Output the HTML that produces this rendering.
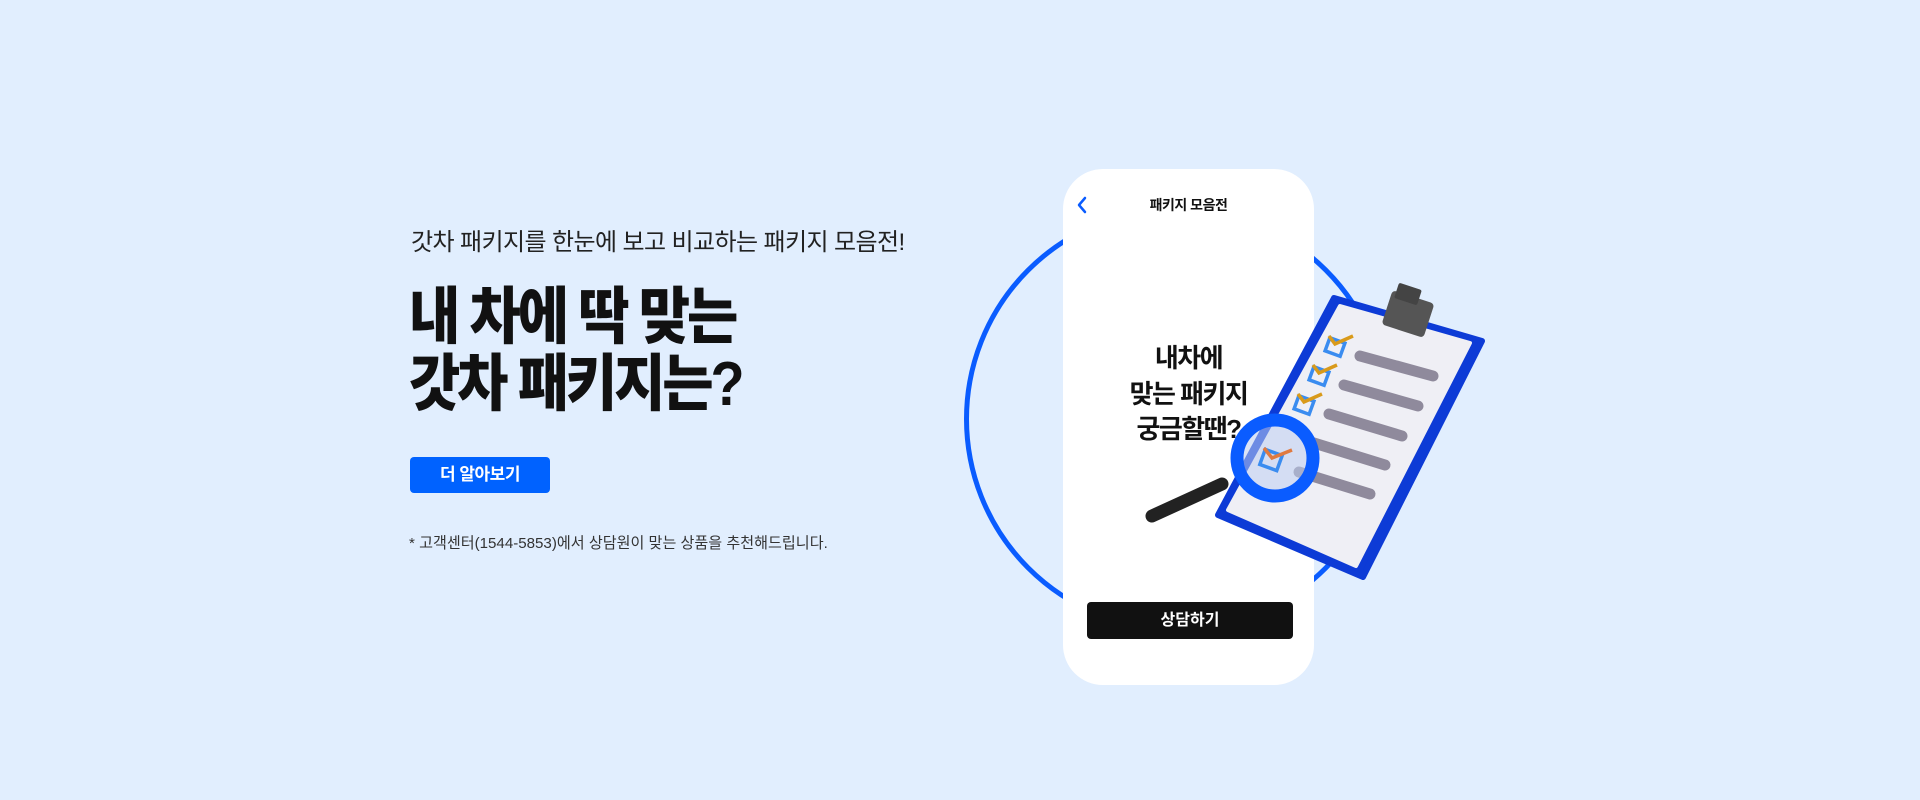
<!DOCTYPE html>
<html><head><meta charset="utf-8"><style>
*{margin:0;padding:0;box-sizing:border-box}
body{width:1920px;height:800px;background:#e1eefe;position:relative;overflow:hidden;font-family:"Liberation Sans","Noto Sans CJK KR",sans-serif;color:#111}
.sub{position:absolute;left:411px;top:222px;font-size:24px;color:#222;letter-spacing:-0.6px;white-space:nowrap}
.h1{position:absolute;left:409px;top:284px;font-size:62px;font-weight:900;line-height:67px;letter-spacing:-3.5px;white-space:nowrap;color:#111;transform:scaleX(0.9);transform-origin:left top}
.btn{position:absolute;left:410px;top:457px;width:140px;height:36px;background:#0062ff;border-radius:4px;color:#fff;font-weight:700;font-size:17px;text-align:center;line-height:36px;letter-spacing:-0.5px}
.note{position:absolute;left:409px;top:531px;font-size:15.1px;color:#333;letter-spacing:0;white-space:nowrap}
.circle{position:absolute;left:964px;top:206px;width:426px;height:426px;border:5px solid #0a5cff;border-radius:50%}
.phone{position:absolute;left:1063px;top:169px;width:251px;height:516px;background:#fff;border-radius:40px}
.title{position:absolute;left:0;width:100%;top:26px;text-align:center;font-size:14px;font-weight:700;letter-spacing:-0.5px}
.ptext{position:absolute;left:0;width:100%;top:172px;text-align:center;font-size:26px;font-weight:700;line-height:35.5px;letter-spacing:-1.5px}
.pbtn{position:absolute;left:24px;top:433px;width:206px;height:37px;background:#111;border-radius:4px;color:#fff;font-size:16px;font-weight:700;text-align:center;line-height:37px}
svg.art{position:absolute;left:0;top:0}
</style></head><body>
<div class="sub">갓차 패키지를 한눈에 보고 비교하는 패키지 모음전!</div>
<div class="h1">내 차에 딱 맞는<br>갓차 패키지는?</div>
<div class="btn">더 알아보기</div>
<div class="note">* 고객센터(1544-5853)에서 상담원이 맞는 상품을 추천해드립니다.</div>
<div class="circle"></div>
<div class="phone">
 <svg style="position:absolute;left:12px;top:27px" width="14" height="18" viewBox="0 0 14 18"><path d="M10 2 L4 9 L10 16" fill="none" stroke="#0a5cff" stroke-width="2.5" stroke-linecap="round" stroke-linejoin="round"/></svg>
 <div class="title">패키지 모음전</div>
 <div class="ptext">내차에<br>맞는 패키지<br>궁금할땐?</div>
 <div class="pbtn">상담하기</div>
</div>
<svg class="art" width="1920" height="800" viewBox="0 0 1920 800">
 <polygon points="1334,298 1482,341 1363,577 1218,515" fill="#0d3bd6" stroke="#0d3bd6" stroke-width="6" stroke-linejoin="round"/>
 <polygon points="1340,306 1470,343 1356,566 1228,510" fill="#efeff5" stroke="#efeff5" stroke-width="4" stroke-linejoin="round"/>
 <rect x="1386" y="296" width="44" height="36" rx="4" fill="#555" transform="rotate(18 1408 314)"/>
 <rect x="1396" y="286" width="24" height="16" rx="2" fill="#444" transform="rotate(18 1408 294)"/>
 <g stroke="#8f8a9c" stroke-width="11" stroke-linecap="round">
  <line x1="1360" y1="356" x2="1433" y2="376"/>
  <line x1="1344" y1="385" x2="1418" y2="406"/>
  <line x1="1329" y1="414" x2="1402" y2="436"/>
  <line x1="1314" y1="443" x2="1385" y2="465"/>
  <line x1="1299" y1="472" x2="1370" y2="494"/>
 </g>
 <g fill="none" stroke-width="3.5">
  <rect x="1327" y="340" width="16" height="14" stroke="#3a8cf0" transform="rotate(20 1335 347)"/>
  <rect x="1311" y="369" width="16" height="14" stroke="#3a8cf0" transform="rotate(20 1319 376)"/>
  <rect x="1296" y="398" width="16" height="14" stroke="#3a8cf0" transform="rotate(20 1304 405)"/>
  <path d="M1329 336 l6 8 l18 -8" stroke="#d99a1a"/>
  <path d="M1313 365 l6 8 l18 -8" stroke="#d99a1a"/>
  <path d="M1298 394 l6 8 l18 -8" stroke="#d99a1a"/>
 </g>
 <line x1="1152" y1="516" x2="1222" y2="484" stroke="#222" stroke-width="13" stroke-linecap="round"/>
 <circle cx="1275" cy="458" r="44" fill="rgba(190,205,240,0.55)"/>
 <circle cx="1275" cy="458" r="38" fill="none" stroke="#0a5cff" stroke-width="13"/>
 <rect x="1262" y="452" width="18" height="16" fill="none" stroke="#3a8cf0" stroke-width="3.5" transform="rotate(20 1271 460)"/>
 <path d="M1264 448 l8 10 l20 -8" fill="none" stroke="#e07a40" stroke-width="3.5"/>
</svg>
</body></html>
